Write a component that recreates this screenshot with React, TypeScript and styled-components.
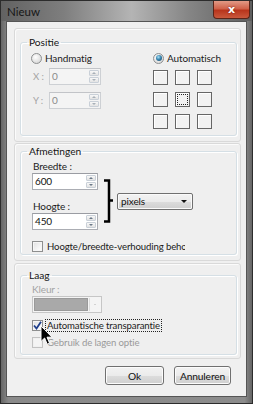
import React from 'react';
import styled, { createGlobalStyle } from 'styled-components';

const Global = createGlobalStyle`
  html, body { margin: 0; padding: 0; background: #ffffff; }
  body { font-family: Lato, "Noto Sans", "Liberation Sans", sans-serif; font-size: 9.6px; letter-spacing: -0.12px; color: #1b1b1b; }
  * { box-sizing: border-box; }
`;

const Window = styled.div`
  position: relative;
  width: 253px;
  height: 404px;
  border: 1px solid #2c2c2c;
  background: #7b7b7b;
  display: flex;
  flex-direction: column;
  overflow: hidden;
`;

const TitleBar = styled.div`
  height: 20px;
  display: flex;
  align-items: flex-start;
  justify-content: space-between;
  padding: 0 2px 0 6px;
  background: linear-gradient(90deg, #626262 0%, #7e7e7e 25%, #acacac 48%, #b4b4b4 52%, #858585 75%, #5e5e5e 100%);
`;

const Title = styled.span`
  font-size: 11.5px;
  letter-spacing: 0;
  line-height: 22px;
  color: #161616;
`;

const CloseButton = styled.div`
  width: 37px;
  height: 18px;
  border: 1px solid #5a2418;
  border-top: none;
  border-radius: 0 0 4px 4px;
  background: linear-gradient(#e29a86 0%, #d0624a 45%, #b8351c 55%, #c9583c 100%);
  display: flex;
  align-items: center;
  justify-content: center;
  color: #ffffff;
  font-family: "DejaVu Sans", sans-serif;
  font-weight: bold;
  font-size: 11px;
  line-height: 1;
  text-shadow: 0 0 2px #6a1a0a;
`;

const Frame = styled.div`
  flex: 1;
  display: flex;
  padding: 0 5px 6px 5px;
  background: linear-gradient(90deg, #666 0%, #8a8a8a 3%, #8c8c8c 97%, #666 100%);
`;

const Client = styled.div`
  flex: 1;
  background: #f0f0f0;
  border: 1px solid #555555;
  display: flex;
  flex-direction: column;
  padding: 6px 5px 0 7px;
`;

const Panel = styled.div<{ $top: number; $bottom: number; $gap?: number }>`
  border: 1px solid #d9d9d9;
  border-radius: 3px;
  box-shadow: inset 1px 1px 0 #fbfbfb;
  background: #efefef;
  padding: ${p => p.$top}px 3px ${p => p.$bottom}px 5px;
  margin-top: ${p => p.$gap ?? 0}px;
`;

const Group = styled.fieldset<{ $h: number }>`
  margin: 0;
  height: ${p => p.$h}px;
  border: 1px solid #d5dfe5;
  border-radius: 3px;
  box-shadow: inset 1px 1px 0 #ffffff, 1px 1px 0 #ffffff;
  padding: 0 0 0 10px;
  display: flex;
  flex-direction: column;
  min-width: 0;
`;

const Legend = styled.legend`
  margin-left: -4px;
  padding: 0 2px;
  font-size: 10.2px;
  letter-spacing: 0;
  line-height: 14px;
  color: #151515;
`;

const PosRow = styled.div`
  display: flex;
  margin-top: 3px;
`;

const LeftCol = styled.div`
  width: 122px;
  display: flex;
  flex-direction: column;
`;

const RightCol = styled.div`
  display: flex;
  flex-direction: column;
`;

const OptionRow = styled.label<{ $mt?: number; $disabled?: boolean }>`
  display: flex;
  align-items: center;
  gap: 3px;
  height: 12px;
  margin-top: ${p => p.$mt ?? 0}px;
  font-size: 10px;
  color: ${p => (p.$disabled ? '#9a9a9a' : '#1b1b1b')};
  white-space: nowrap;
`;

const Radio = styled.span<{ $checked?: boolean }>`
  width: 11px;
  height: 11px;
  border-radius: 50%;
  border: 1px solid #8d8f90;
  background: radial-gradient(circle at 40% 35%, #ffffff 0%, #e6e6e6 50%, #cfcfcf 100%);
  display: flex;
  align-items: center;
  justify-content: center;
  flex: none;
  &::after {
    content: '';
    display: ${p => (p.$checked ? 'block' : 'none')};
    width: 6px;
    height: 6px;
    border-radius: 50%;
    background: radial-gradient(circle at 40% 35%, #a8e0f6 0%, #3a86b0 45%, #163f5c 100%);
  }
`;

const FieldRow = styled.div<{ $mt: number }>`
  display: flex;
  align-items: center;
  margin-top: ${p => p.$mt}px;
`;

const FieldLabel = styled.span<{ $w: number; $disabled?: boolean }>`
  width: ${p => p.$w}px;
  padding-left: 2px;
  color: ${p => (p.$disabled ? '#a3a3a3' : '#1b1b1b')};
`;

const SpinBox = styled.div<{ $w: number; $disabled?: boolean }>`
  width: ${p => p.$w}px;
  height: 17px;
  display: flex;
  border: 1px solid ${p => (p.$disabled ? '#cdd0d4' : '#abadb3')};
  border-top-color: ${p => (p.$disabled ? '#c2c4c8' : '#9a9ca2')};
  background: ${p => (p.$disabled ? '#f4f4f4' : '#ffffff')};
`;

const SpinValue = styled.span<{ $disabled?: boolean }>`
  flex: 1;
  padding-left: 2px;
  line-height: 15px;
  font-size: 10px;
  color: ${p => (p.$disabled ? '#8a8a8a' : '#111111')};
`;

const SpinButtons = styled.div`
  width: 12px;
  display: flex;
  flex-direction: column;
  gap: 1px;
  padding: 1px;
`;

const SpinBtn = styled.div`
  flex: 1;
  border: 1px solid #c9d0d8;
  border-radius: 1px;
  background: linear-gradient(#f8f8f8, #e3e3e3);
  display: flex;
  align-items: center;
  justify-content: center;
`;

const Tri = styled.span<{ $dir: 'up' | 'down'; $color?: string; $size?: number }>`
  width: 0;
  height: 0;
  border-left: ${p => p.$size ?? 2}px solid transparent;
  border-right: ${p => p.$size ?? 2}px solid transparent;
  ${p =>
    p.$dir === 'up'
      ? `border-bottom: ${p.$size ?? 2}px solid ${p.$color ?? '#6a7888'};`
      : `border-top: ${p.$size ?? 2}px solid ${p.$color ?? '#6a7888'};`}
`;

const AnchorGrid = styled.div`
  margin-top: 6px;
  display: grid;
  grid-template-columns: repeat(3, 15px);
  grid-auto-rows: 15px;
  column-gap: 7px;
  row-gap: 7px;
`;

const AnchorCell = styled.div<{ $focus?: boolean }>`
  border: 1px solid #666666;
  background: #f2f2f2;
  box-shadow: inset 1px 1px 0 #ffffff;
  display: flex;
  align-items: center;
  justify-content: center;
  &::after {
    content: '';
    display: ${p => (p.$focus ? 'block' : 'none')};
    width: 9px;
    height: 9px;
    border: 1px dotted #222222;
  }
`;

const SizeRow = styled.div`
  display: flex;
  align-items: flex-start;
  margin-top: 2px;
`;

const SizeCol = styled.div`
  display: flex;
  flex-direction: column;
  width: 66px;
  margin-left: 1px;
`;

const SmallLabel = styled.span<{ $mt?: number; $disabled?: boolean }>`
  line-height: 12px;
  height: 12px;
  margin-top: ${p => p.$mt ?? 0}px;
  padding-left: 1px;
  margin-bottom: 1px;
  font-size: 10px;
  color: ${p => (p.$disabled ? '#a3a3a3' : '#1b1b1b')};
`;

const LinkGroup = styled.div`
  display: flex;
  align-items: center;
  margin-top: 19px;
  margin-left: 6px;
  gap: 3px;
`;

const Combo = styled.div`
  width: 76px;
  height: 17px;
  border: 1px solid #707070;
  border-radius: 2px;
  background: linear-gradient(#f3f3f3 0%, #ebebeb 50%, #dddddd 51%, #cfcfcf 100%);
  box-shadow: inset 0 0 0 1px #fafafa;
  display: flex;
  align-items: center;
  justify-content: space-between;
  padding: 0 5px 0 3px;
  font-size: 10px;
  color: #111111;
`;

const CheckRow = styled.label<{ $mt: number; $disabled?: boolean }>`
  display: flex;
  align-items: center;
  height: 13px;
  margin-top: ${p => p.$mt}px;
  margin-left: 1px;
  gap: 2px;
  color: ${p => (p.$disabled ? '#9a9a9a' : '#1b1b1b')};
  white-space: nowrap;
`;

const CheckBox = styled.span<{ $disabled?: boolean }>`
  width: 11px;
  height: 11px;
  flex: none;
  border: 1px solid ${p => (p.$disabled ? '#c2c2c2' : '#8e8f8f')};
  background: ${p =>
    p.$disabled ? '#f4f4f4' : 'linear-gradient(135deg, #e0e0e0 0%, #f4f4f4 60%, #ffffff 100%)'};
  box-shadow: inset 0 0 0 1px ${p => (p.$disabled ? '#f0f0f0' : '#f6f6f6')};
  display: flex;
  align-items: center;
  justify-content: center;
`;

const CheckText = styled.span<{ $w?: number; $focus?: boolean }>`
  display: block;
  overflow: hidden;
  ${p => (p.$w ? `width: ${p.$w}px;` : '')}
  padding: 0 1px;
  line-height: 11px;
  border: 1px ${p => (p.$focus ? 'dotted #222222' : 'solid transparent')};
`;

const ColorCombo = styled.div`
  width: 70px;
  height: 17px;
  display: flex;
  border: 1px solid #c6c6c6;
  background: #f4f4f4;
  padding: 1px;
  margin-left: 1px;
`;

const Swatch = styled.div`
  width: 54px;
  background: #a9a9a9;
  border: 1px solid #9a9a9a;
`;

const ColorArrow = styled.div`
  flex: 1;
  margin-left: 1px;
  border-left: 1px solid #dcdcdc;
  display: flex;
  align-items: center;
  justify-content: center;
`;

const ButtonRow = styled.div`
  display: flex;
  justify-content: flex-end;
  gap: 10px;
  margin-top: 7px;
  padding-right: 10px;
`;

const Button = styled.div<{ $w: number }>`
  width: ${p => p.$w}px;
  height: 19px;
  border: 1px solid #707070;
  border-radius: 3px;
  background: linear-gradient(#f3f3f3 0%, #ebebeb 50%, #dddddd 51%, #cfcfcf 100%);
  box-shadow: inset 0 0 0 1px #fcfcfc;
  display: flex;
  align-items: center;
  justify-content: center;
  color: #111111;
  font-size: 10.2px;
`;

const Cursor = styled.svg`
  position: absolute;
  left: 39px;
  top: 324px;
`;

const Bracket = () => (
  <svg width="10" height="44" viewBox="0 0 10 44">
    <path d="M0 1.5 H5 V42.5 H0 M5 21.5 H9" fill="none" stroke="#000" strokeWidth="2.5" />
  </svg>
);

const Check = () => (
  <svg width="9" height="9" viewBox="0 0 9 9">
    <path d="M1 4.5 L3.5 7.5 L8 0.8" fill="none" stroke="#1f3f8c" strokeWidth="1.8" />
  </svg>
);

const Spin: React.FC<{ value: string; w: number; disabled?: boolean }> = ({ value, w, disabled }) => (
  <SpinBox $w={w} $disabled={disabled}>
    <SpinValue $disabled={disabled}>{value}</SpinValue>
    <SpinButtons>
      <SpinBtn>
        <Tri $dir="up" $color={disabled ? '#a8b0b8' : '#6a7888'} />
      </SpinBtn>
      <SpinBtn>
        <Tri $dir="down" $color={disabled ? '#a8b0b8' : '#6a7888'} />
      </SpinBtn>
    </SpinButtons>
  </SpinBox>
);

export default function App() {
  return (
    <>
      <Global />
      <Window>
        <TitleBar>
          <Title>Nieuw</Title>
          <CloseButton>x</CloseButton>
        </TitleBar>
        <Frame>
          <Client>
            <Panel $top={6} $bottom={5}>
              <Group $h={101}>
                <Legend>Positie</Legend>
                <PosRow>
                  <LeftCol>
                    <OptionRow>
                      <Radio />
                      Handmatig
                    </OptionRow>
                    <FieldRow $mt={4}>
                      <FieldLabel $w={18} $disabled>X :</FieldLabel>
                      <Spin value="0" w={52} disabled />
                    </FieldRow>
                    <FieldRow $mt={7}>
                      <FieldLabel $w={18} $disabled>Y :</FieldLabel>
                      <Spin value="0" w={52} disabled />
                    </FieldRow>
                  </LeftCol>
                  <RightCol>
                    <OptionRow>
                      <Radio $checked />
                      Automatisch
                    </OptionRow>
                    <AnchorGrid>
                      <AnchorCell />
                      <AnchorCell />
                      <AnchorCell />
                      <AnchorCell />
                      <AnchorCell $focus />
                      <AnchorCell />
                      <AnchorCell />
                      <AnchorCell />
                      <AnchorCell />
                    </AnchorGrid>
                  </RightCol>
                </PosRow>
              </Group>
            </Panel>
            <Panel $top={0} $bottom={5} $gap={1}>
              <Group $h={111}>
                <Legend>Afmetingen</Legend>
                <SizeRow>
                  <SizeCol>
                    <SmallLabel>Breedte :</SmallLabel>
                    <Spin value="600" w={66} />
                    <SmallLabel $mt={10}>Hoogte :</SmallLabel>
                    <Spin value="450" w={66} />
                  </SizeCol>
                  <LinkGroup>
                    <Bracket />
                    <Combo>
                      <span>pixels</span>
                      <Tri $dir="down" $color="#111" $size={3} />
                    </Combo>
                  </LinkGroup>
                </SizeRow>
                <CheckRow $mt={10}>
                  <CheckBox />
                  <CheckText $w={141}>Hoogte/breedte-verhouding behouden</CheckText>
                </CheckRow>
              </Group>
            </Panel>
            <Panel $top={4} $bottom={3} $gap={2}>
              <Group $h={87}>
                <Legend>Laag</Legend>
                <SmallLabel $disabled $mt={1}>Kleur :</SmallLabel>
                <ColorCombo>
                  <Swatch />
                  <ColorArrow>
                    <Tri $dir="down" $color="#b0b0b0" $size={1.5} />
                  </ColorArrow>
                </ColorCombo>
                <CheckRow $mt={6}>
                  <CheckBox>
                    <Check />
                  </CheckBox>
                  <CheckText $focus>Automatische transparantie</CheckText>
                </CheckRow>
                <CheckRow $mt={4} $disabled>
                  <CheckBox $disabled />
                  <CheckText>Gebruik de lagen optie</CheckText>
                </CheckRow>
              </Group>
            </Panel>
            <ButtonRow>
              <Button $w={59}>Ok</Button>
              <Button $w={57}>Annuleren</Button>
            </ButtonRow>
          </Client>
        </Frame>
        <Cursor width="13" height="21" viewBox="0 0 13 21">
          <path
            d="M1 1 V16.5 L4.6 13 L7.2 19.2 L9.6 18.2 L7 12.2 H12 Z"
            fill="#000"
            stroke="#fff"
            strokeWidth="1"
            strokeLinejoin="miter"
          />
        </Cursor>
      </Window>
    </>
  );
}
